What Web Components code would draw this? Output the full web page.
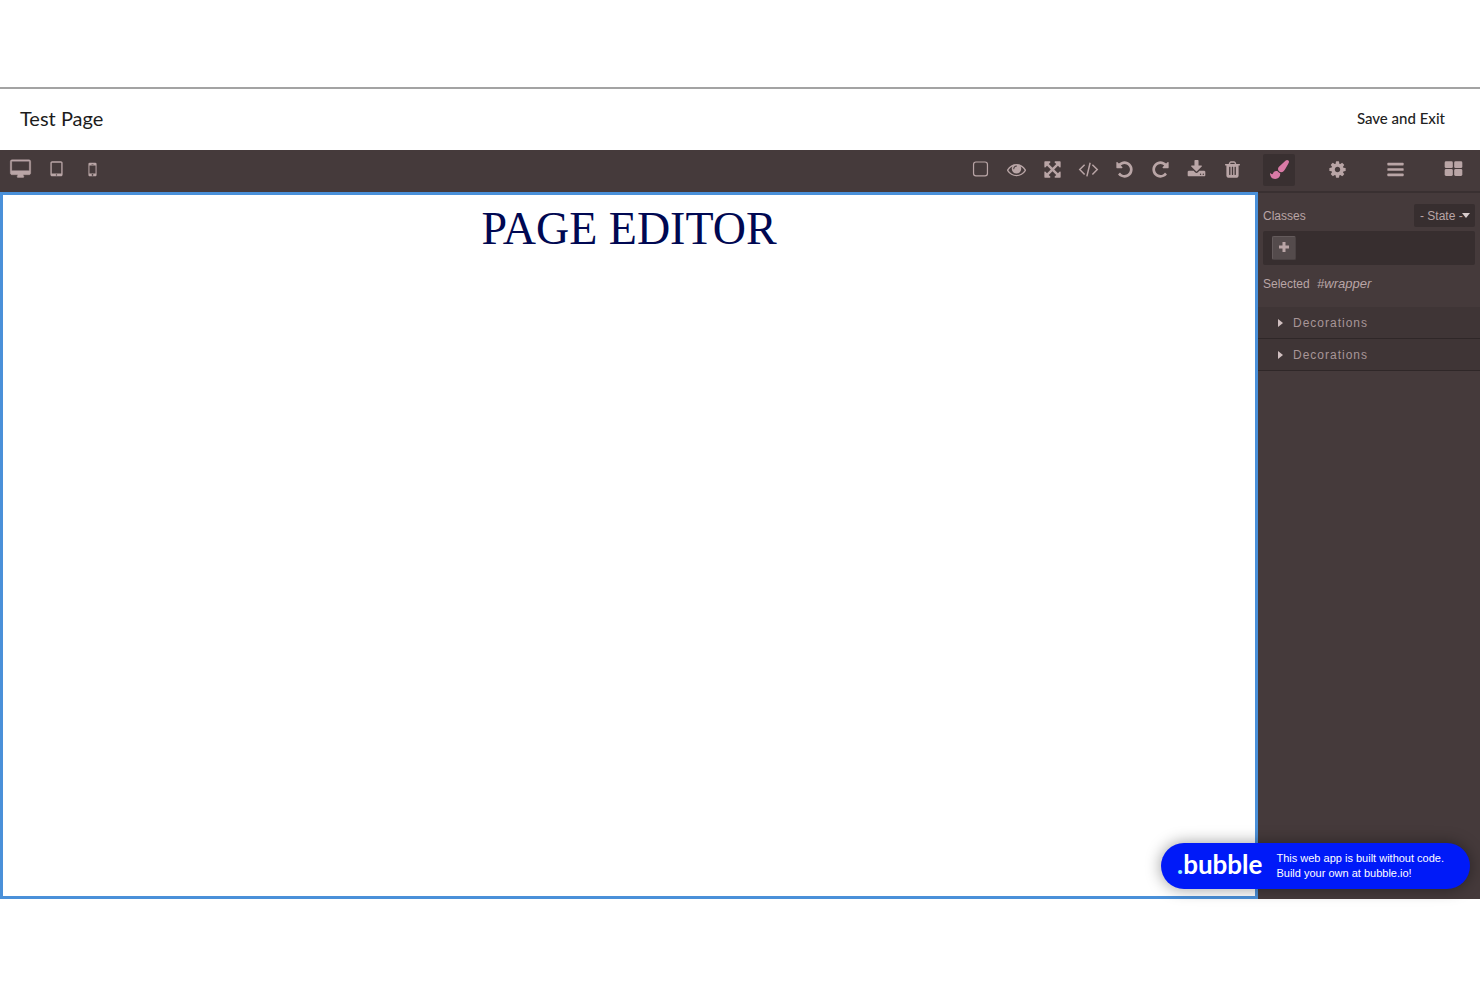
<!DOCTYPE html>
<html lang="en">
<head>
<meta charset="utf-8">
<title>Test Page</title>
<style>
:root {
    --primary: #453a3b;
    --secondary: #b9a5a6;
    --accent: #d97aa6;
    --field: #372e2f;
    --line: #393031;
    --frame: #4a90d9;
    --ui-font: "Liberation Sans", Arial, Helvetica, sans-serif;
    --title-font: Lato, "Open Sans", sans-serif;
}
body {
    margin: 0;
    background: #fff;
}
</style>
</head>
<body>
<editor-app>
    <page-header slot="header">
        <span slot="title">Test Page</span>
        <span slot="action">Save and Exit</span>
    </page-header>
    <tool-bar slot="main">
        <icon-button icon="desktop" label="Desktop"></icon-button>
        <icon-button icon="tablet" label="Tablet"></icon-button>
        <icon-button icon="mobile" label="Mobile"></icon-button>
        <icon-button slot="end" icon="square" label="View components"></icon-button>
        <icon-button slot="end" icon="eye" label="Preview"></icon-button>
        <icon-button slot="end" icon="arrows" label="Fullscreen"></icon-button>
        <icon-button slot="end" icon="code" label="View code"></icon-button>
        <icon-button slot="end" icon="undo" label="Undo"></icon-button>
        <icon-button slot="end" icon="redo" label="Redo"></icon-button>
        <icon-button slot="end" icon="download" label="Import"></icon-button>
        <icon-button slot="end" icon="trash" label="Clear canvas"></icon-button>
    </tool-bar>
    <page-canvas slot="main">PAGE EDITOR</page-canvas>
    <view-tabs slot="side">
        <icon-button icon="brush" label="Style manager" active></icon-button>
        <icon-button icon="cog" label="Settings"></icon-button>
        <icon-button icon="bars" label="Layers"></icon-button>
        <icon-button icon="blocks" label="Blocks"></icon-button>
    </view-tabs>
    <class-manager slot="side">
        <span slot="label">Classes</span>
        <span slot="selected">#wrapper</span>
    </class-manager>
    <style-sector slot="side">Decorations</style-sector>
    <style-sector slot="side">Decorations</style-sector>
    <bubble-badge slot="badge">
        <span>This web app is built without code.</span>
        <span>Build your own at bubble.io!</span>
    </bubble-badge>
</editor-app>

<script>
const UNDO = 'M1664 896q0 156-61 298t-164 245-245 164-298 61q-172 0-327-72.5t-264-204.5q-7-10-6.5-22.5t8.5-20.5l137-138q10-9 25-9 16 2 23 12 73 95 179 147t225 52q104 0 198.5-40.5t163.5-109.5 109.5-163.5 40.5-198.5-40.5-198.5-109.5-163.5-163.5-109.5-198.5-40.5q-98 0-188 35.5t-160 101.5l137 138q31 30 14 69-17 40-59 40h-448q-26 0-45-19t-19-45v-448q0-42 40-59 39-17 69 14l130 129q107-101 244.5-156.5t284.5-55.5q156 0 298 61t245 164 164 245 61 298z';

const ICONS = {
    desktop: '<path transform="translate(-64 -20)" d="M1792 992v-832q0-13-9.5-22.5t-22.5-9.5h-1600q-13 0-22.5 9.5t-9.5 22.5v832q0 13 9.5 22.5t22.5 9.5h1600q13 0 22.5-9.5t9.5-22.5zm128-832v1088q0 66-47 113t-113 47h-544q0 37 16 77.5t32 71 16 43.5q0 26-19 45t-45 19h-512q-26 0-45-19t-19-45q0-14 16-44t32-70 16-78h-544q-66 0-113-47t-47-113v-1088q0-66 47-113t113-47h1600q66 0 113 47t47 113z" stroke="currentColor" stroke-width="40"/>',
    tablet: '<path d="M960 1408q0-26-19-45t-45-19-45 19-19 45 19 45 45 19 45-19 19-45zm384-160v-960q0-13-9.5-22.5t-22.5-9.5h-832q-13 0-22.5 9.5t-9.5 22.5v960q0 13 9.5 22.5t22.5 9.5h832q13 0 22.5-9.5t9.5-22.5zm128-960v1088q0 66-47 113t-113 47h-832q-66 0-113-47t-47-113v-1088q0-66 47-113t113-47h832q66 0 113 47t47 113z"/>',
    mobile: '<path d="M976 1408q0-33-23.5-56.5t-56.5-23.5-56.5 23.5-23.5 56.5 23.5 56.5 56.5 23.5 56.5-23.5 23.5-56.5zm208-160v-704q0-13-9.5-22.5t-22.5-9.5h-512q-13 0-22.5 9.5t-9.5 22.5v704q0 13 9.5 22.5t22.5 9.5h512q13 0 22.5-9.5t9.5-22.5zm-192-848q0-16-16-16h-160q-16 0-16 16t16 16h160q16 0 16-16zm288-16v1024q0 52-38 90t-90 38h-512q-52 0-90-38t-38-90v-1024q0-52 38-90t90-38h512q52 0 90 38t38 90z"/>',
    square: '<rect x="240" y="190" width="1312" height="1312" rx="230" fill="none" stroke="currentColor" stroke-width="115"/>',
    eye: '<path d="M1664 960q-152-236-381-353 61 104 61 225 0 185-131.5 316.5t-316.5 131.5-316.5-131.5-131.5-316.5q0-121 61-225-229 117-381 353 133 205 333.5 326.5t434.5 121.5 434.5-121.5 333.5-326.5zm-720-384q0-20-14-34t-34-14q-125 0-214.5 89.5t-89.5 214.5q0 20 14 34t34 14 34-14 14-34q0-86 61-147t147-61q20 0 34-14t14-34zm848 384q0 34-20 69-140 230-376.5 368.5t-499.5 138.5-499.5-139-376.5-368q-20-35-20-69t20-69q140-229 376.5-368t499.5-139 499.5 139 376.5 368q20 35 20 69z"/>',
    arrows: '<path d="M1411 541l-355 355 355 355 144-144q29-31 70-14 39 17 39 59v448q0 26-19 45t-45 19h-448q-42 0-59-40-17-39 14-69l144-144-355-355-355 355 144 144q31 30 14 69-17 40-59 40h-448q-26 0-45-19t-19-45v-448q0-42 40-59 39-17 69 14l144 144 355-355-355-355-144 144q-19 19-45 19-12 0-24-5-40-17-40-59v-448q0-26 19-45t45-19h448q42 0 59 40 17 39-14 69l-144 144 355 355 355-355-144-144q-31-30-14-69 17-40 59-40h448q26 0 45 19t19 45v448q0 42-39 59-13 5-25 5-26 0-45-19z"/>',
    code: '<path d="M530 440L70 900l460 460M1262 440l460 460-460 460M1050 260L742 1540" fill="none" stroke="currentColor" stroke-width="140"/>',
    undo: `<path d="${UNDO}"/>`,
    redo: `<path transform="translate(1792 0) scale(-1 1)" d="${UNDO}"/>`,
    download: '<path d="M1344 1344q0-26-19-45t-45-19-45 19-19 45 19 45 45 19 45-19 19-45zm256 0q0-26-19-45t-45-19-45 19-19 45 19 45 45 19 45-19 19-45zm128-224v320q0 40-28 68t-68 28h-1472q-40 0-68-28t-28-68v-320q0-40 28-68t68-28h465l135 136q58 56 136 56t136-56l136-136h464q40 0 68 28t28 68zm-325-569q17 41-14 70l-448 448q-18 19-45 19t-45-19l-448-448q-31-29-14-70 17-39 59-39h256v-448q0-26 19-45t45-19h256q26 0 45 19t19 45v448h256q42 0 59 39z"/>',
    trash: '<path d="M704 1376v-704q0-14-9-23t-23-9h-64q-14 0-23 9t-9 23v704q0 14 9 23t23 9h64q14 0 23-9t9-23zm256 0v-704q0-14-9-23t-23-9h-64q-14 0-23 9t-9 23v704q0 14 9 23t23 9h64q14 0 23-9t9-23zm256 0v-704q0-14-9-23t-23-9h-64q-14 0-23 9t-9 23v704q0 14 9 23t23 9h64q14 0 23-9t9-23zm-544-992h448l-48-117q-7-9-17-11h-317q-10 2-17 11zm928 32v64q0 14-9 23t-23 9h-96v948q0 83-47 143.5t-113 60.5h-832q-66 0-113-58.5t-47-141.5v-952h-96q-14 0-23-9t-9-23v-64q0-14 9-23t23-9h309l70-167q15-37 54-63t79-26h320q40 0 79 26t54 63l70 167h309q14 0 23 9t9 23z"/>',
    brush: '<path d="M1615 0q70 0 122.5 46.5t52.5 116.5q0 63-45 151-332 629-465 752-97 91-218 91-126 0-216.5-92.5t-90.5-219.5q0-128 92-212l638-579q59-54 130-54zm-909 1034q39 76 106.5 130t150.5 76l1 71q4 213-129.5 347t-348.5 134q-123 0-218-46.5t-152.5-127.5-86.5-183-29-220q7 5 41 30t62 44.5 59 36.5 46 17q41 0 55-37 25-66 57.5-112.5t69.5-76 88-47.5 103-25.5 125-10.5z"/>',
    cog: '<path d="M1152 896q0-106-75-181t-181-75-181 75-75 181 75 181 181 75 181-75 75-181zm512-109v222q0 12-8 23t-20 13l-185 28q-19 54-39 91 35 50 107 138 10 12 10 25t-9 23q-27 37-99 108t-94 71q-12 0-26-9l-138-108q-44 23-91 38-16 136-29 186-7 28-36 28h-222q-14 0-24.5-8.5t-11.5-21.5l-28-184q-49-16-90-37l-141 107q-10 9-25 9-14 0-25-11-126-114-165-168-7-10-7-23 0-12 8-23 15-21 51-66.5t54-70.5q-27-50-41-99l-183-27q-13-2-21-12.5t-8-23.5v-222q0-12 8-23t19-13l186-28q14-46 39-92-40-57-107-138-10-12-10-24 0-10 9-23 26-36 98.5-107.5t94.5-71.5q13 0 26 10l138 107q44-23 91-38 16-136 29-186 7-28 36-28h222q14 0 24.5 8.5t11.5 21.5l28 184q49 16 90 37l142-107q9-9 24-9 13 0 25 10 129 119 165 170 7 8 7 22 0 12-8 23-15 21-51 66.5t-54 70.5q26 50 41 98l183 28q13 2 21 12.5t8 23.5z"/>',
    bars: '<rect x="128" y="256" width="1536" height="256" rx="64"/><rect x="128" y="768" width="1536" height="256" rx="64"/><rect x="128" y="1280" width="1536" height="256" rx="64"/>',
    blocks: '<rect x="64" y="120" width="768" height="640" rx="128"/><rect x="960" y="120" width="768" height="640" rx="128"/><rect x="64" y="860" width="768" height="640" rx="128"/><rect x="960" y="860" width="768" height="640" rx="128"/>'
};

function define(name, html, setup) {
    const template = document.createElement('template');
    template.innerHTML = html;
    customElements.define(name, class extends HTMLElement {
        constructor() {
            super();
            this.attachShadow({mode: 'open'});
            this.shadowRoot.appendChild(template.content.cloneNode(true));
        }
        connectedCallback() {
            if (setup) setup(this, this.shadowRoot);
        }
    });
}

define('editor-app', `
<style>
:host {
    display: flex;
    flex-direction: column;
    box-sizing: border-box;
    min-height: 100vh;
    padding: 87px 0 88px;
}
.workspace {
    position: relative;
    flex: 1;
    display: grid;
    grid-template-columns: 85fr 15fr;
}
main, aside {
    display: flex;
    flex-direction: column;
    min-width: 0;
}
aside {
    background: var(--primary);
    color: var(--secondary);
}
.badge {
    position: absolute;
    right: 10px;
    bottom: 10px;
}
</style>
<slot name="header"></slot>
<div class="workspace">
    <main><slot name="main"></slot></main>
    <aside><slot name="side"></slot></aside>
    <div class="badge"><slot name="badge"></slot></div>
</div>`);

define('page-header', `
<style>
:host {
    display: flex;
    align-items: center;
    justify-content: space-between;
    box-sizing: border-box;
    height: 63px;
    padding: 0 35px 4px 20px;
    border-top: 2px solid #a3a3a3;
    font-family: var(--title-font);
    color: #1c1c1c;
}
h1 {
    margin: 0;
    font-size: 20px;
    font-weight: 400;
}
button {
    padding: 0;
    border: 0;
    background: none;
    font: 500 15px var(--title-font);
    color: #222;
    cursor: pointer;
}
</style>
<h1><slot name="title"></slot></h1>
<button type="button"><slot name="action"></slot></button>`);

define('icon-button', `
<style>
:host {
    display: block;
}
button {
    display: flex;
    align-items: center;
    justify-content: center;
    width: 32px;
    height: 32px;
    padding: 0 0 2px;
    border: 0;
    border-radius: 2px;
    background: none;
    color: var(--secondary);
    cursor: pointer;
}
:host([active]) button {
    background: #393031;
    color: var(--accent);
}
svg {
    width: 19px;
    height: 19px;
    overflow: visible;
    fill: currentColor;
}
</style>
<button type="button"><svg viewBox="0 0 1792 1792" aria-hidden="true"></svg></button>`,
(host, root) => {
    root.querySelector('svg').innerHTML = ICONS[host.getAttribute('icon')];
    root.querySelector('button').setAttribute('aria-label', host.getAttribute('label'));
});

define('tool-bar', `
<style>
:host {
    display: flex;
    justify-content: space-between;
    box-sizing: border-box;
    height: 42px;
    padding: 4px 10px 6px 4px;
    background: var(--primary);
}
div {
    display: flex;
    gap: 4px;
}
</style>
<div><slot></slot></div>
<div><slot name="end"></slot></div>`);

define('page-canvas', `
<style>
:host {
    display: block;
    flex: 1;
    padding: 8px;
    border: 3px solid var(--frame);
    background: #fff;
}
h2 {
    margin: 0;
    font: 400 46px/52px "Liberation Serif", "Times New Roman", serif;
    text-align: center;
    color: #000852;
}
</style>
<h2><slot></slot></h2>`);

define('view-tabs', `
<style>
:host {
    display: flex;
    justify-content: space-between;
    box-sizing: border-box;
    height: 43px;
    padding: 4px 10px 6px 5px;
    border-bottom: 2px solid var(--line);
}
</style>
<slot></slot>`);

define('class-manager', `
<style>
:host {
    display: block;
    padding: 11px 5px 14px;
    font: 12px/18px var(--ui-font);
}
.row {
    display: flex;
    align-items: center;
    justify-content: space-between;
    margin-bottom: 4px;
}
.state {
    position: relative;
}
select {
    appearance: none;
    width: 61px;
    height: 23px;
    padding: 0 0 0 6px;
    border: 0;
    border-radius: 2px;
    background: var(--field);
    font: 12px var(--ui-font);
    color: var(--secondary);
}
.arrow {
    position: absolute;
    right: 5px;
    top: 9px;
    border: 4px solid transparent;
    border-top: 5px solid #d8cccc;
    border-bottom: 0;
    pointer-events: none;
}
.tags {
    padding: 5px 9px;
    border-radius: 2px;
    background: var(--field);
}
.add {
    display: flex;
    align-items: center;
    justify-content: center;
    width: 24px;
    height: 24px;
    padding: 0 0 2px;
    border: 1px solid #645b5c;
    border-right-color: #4a4243;
    border-bottom-color: #4a4243;
    border-radius: 2px;
    background: #544b4c;
    color: var(--secondary);
}
p {
    margin: 10px 0 0;
}
em {
    margin-left: 4px;
    font-size: 13px;
}
</style>
<div class="row">
    <label for="state"><slot name="label"></slot></label>
    <div class="state">
        <select id="state"><option>- State -</option></select>
        <span class="arrow"></span>
    </div>
</div>
<div class="tags">
    <button class="add" type="button" aria-label="Add class">
        <svg width="10" height="10" viewBox="0 0 10 10" fill="none" stroke="currentColor" stroke-width="3"><path d="M5 0v10M0 5h10"/></svg>
    </button>
</div>
<p>Selected <em><slot name="selected"></slot></em></p>`);

define('style-sector', `
<style>
:host {
    display: block;
    border-bottom: 1px solid #2f2728;
}
button {
    display: flex;
    align-items: center;
    gap: 10px;
    width: 100%;
    height: 31px;
    padding: 0 20px;
    border: 0;
    background: #3f3536;
    font: 12px var(--ui-font);
    letter-spacing: 1px;
    color: #a89698;
    text-align: left;
}
i {
    border: 4px solid transparent;
    border-left: 5px solid #d0bfc0;
    border-right: 0;
}
</style>
<button type="button" aria-expanded="false"><i></i><slot></slot></button>`);

define('bubble-badge', `
<style>
:host {
    display: block;
}
a {
    display: flex;
    align-items: center;
    gap: 14px;
    box-sizing: border-box;
    width: 309px;
    height: 46px;
    padding: 0 16px;
    border-radius: 23px;
    background: #001af8;
    box-shadow: 0 0 16px rgba(0, 0, 0, .4);
    color: #fff;
    text-decoration: none;
    white-space: nowrap;
}
.logo {
    padding-bottom: 4px;
    font: 700 26px/34px Lato, sans-serif;
}
.dot {
    color: #8ff3ff;
}
.text {
    display: flex;
    flex-direction: column;
    font: 11px/15px var(--ui-font);
}
</style>
<a href="https://bubble.io">
    <span class="logo"><span class="dot">.</span>bubble</span>
    <span class="text"><slot></slot></span>
</a>`);
</script>
</body>
</html>
